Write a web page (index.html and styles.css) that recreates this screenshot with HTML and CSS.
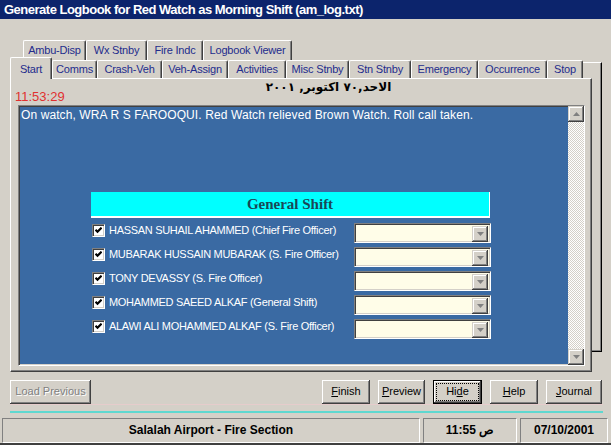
FILE: index.html
```html
<!DOCTYPE html>
<html>
<head>
<meta charset="utf-8">
<link rel="stylesheet" href="styles.css">
</head>
<body>
<div class="win">
  <div class="title">Generate Logbook for Red Watch as Morning Shift (am_log.txt)</div>
  <div class="tabctl">
    <div class="row1">
      <div class="tab w-ambu">Ambu-Disp</div>
      <div class="tab w-wx">Wx Stnby</div>
      <div class="tab w-fire">Fire Indc</div>
      <div class="tab w-logv">Logbook Viewer</div>
    </div>
    <div class="front-wrap">
      <div class="front">
        <div class="row2">
          <div class="tab sel w-start">Start</div>
          <div class="tab w-comms">Comms</div>
          <div class="tab w-crash">Crash-Veh</div>
          <div class="tab w-veh">Veh-Assign</div>
          <div class="tab w-act">Activities</div>
          <div class="tab w-misc">Misc Stnby</div>
          <div class="tab w-stn">Stn Stnby</div>
          <div class="tab w-emer">Emergency</div>
          <div class="tab w-occ">Occurrence</div>
          <div class="tab w-stop">Stop</div>
          <div class="filler"></div>
        </div>
        <div class="page">
          <div class="date">الاحد,٧٠ اكتوبر, ٢٠٠١</div>
          <div class="clock">11:53:29</div>
          <div class="memo">
            <div class="memo-body">
              <div class="memo-text">On watch, WRA R S FAROOQUI. Red Watch relieved Brown Watch. Roll call taken.</div>
              <div class="gshift">General Shift</div>
              <div class="rows">
                <div class="row">
                  <span class="chk"><svg width="7" height="7" viewBox="0 0 7 7"><polyline points="0.5,2.8 2.5,4.8 6.6,0.7" fill="none" stroke="#000" stroke-width="2.2"/></svg></span>
                  <span class="lbl">HASSAN SUHAIL AHAMMED (Chief Fire Officer)</span>
                  <span class="combo"><span class="drop"><svg width="7" height="4" viewBox="0 0 7 4"><path d="M0 0h7L3.5 4z" fill="#808080"/></svg></span></span>
                </div>
                <div class="row">
                  <span class="chk"><svg width="7" height="7" viewBox="0 0 7 7"><polyline points="0.5,2.8 2.5,4.8 6.6,0.7" fill="none" stroke="#000" stroke-width="2.2"/></svg></span>
                  <span class="lbl">MUBARAK HUSSAIN MUBARAK (S. Fire Officer)</span>
                  <span class="combo"><span class="drop"><svg width="7" height="4" viewBox="0 0 7 4"><path d="M0 0h7L3.5 4z" fill="#808080"/></svg></span></span>
                </div>
                <div class="row">
                  <span class="chk"><svg width="7" height="7" viewBox="0 0 7 7"><polyline points="0.5,2.8 2.5,4.8 6.6,0.7" fill="none" stroke="#000" stroke-width="2.2"/></svg></span>
                  <span class="lbl">TONY DEVASSY (S. Fire Officer)</span>
                  <span class="combo"><span class="drop"><svg width="7" height="4" viewBox="0 0 7 4"><path d="M0 0h7L3.5 4z" fill="#808080"/></svg></span></span>
                </div>
                <div class="row">
                  <span class="chk"><svg width="7" height="7" viewBox="0 0 7 7"><polyline points="0.5,2.8 2.5,4.8 6.6,0.7" fill="none" stroke="#000" stroke-width="2.2"/></svg></span>
                  <span class="lbl">MOHAMMED SAEED ALKAF (General Shift)</span>
                  <span class="combo"><span class="drop"><svg width="7" height="4" viewBox="0 0 7 4"><path d="M0 0h7L3.5 4z" fill="#808080"/></svg></span></span>
                </div>
                <div class="row">
                  <span class="chk"><svg width="7" height="7" viewBox="0 0 7 7"><polyline points="0.5,2.8 2.5,4.8 6.6,0.7" fill="none" stroke="#000" stroke-width="2.2"/></svg></span>
                  <span class="lbl">ALAWI ALI MOHAMMED ALKAF (S. Fire Officer)</span>
                  <span class="combo"><span class="drop"><svg width="7" height="4" viewBox="0 0 7 4"><path d="M0 0h7L3.5 4z" fill="#808080"/></svg></span></span>
                </div>
              </div>
            </div>
            <div class="vscroll">
              <div class="sbtn"><svg width="7" height="4" viewBox="0 0 7 4"><path d="M3.5 0L7 4H0z" fill="#808080"/></svg></div>
              <div class="track"></div>
              <div class="sbtn"><svg width="7" height="4" viewBox="0 0 7 4"><path d="M0 0h7L3.5 4z" fill="#808080"/></svg></div>
            </div>
          </div>
        </div>
      </div>
      <div class="backedge"></div>
    </div>
  </div>
  <div class="buttons">
    <div class="btn disabled w-load">Load Previous</div>
    <div class="btn w-finish first"><u>F</u>inish</div>
    <div class="btn w-prev"><u>P</u>review</div>
    <div class="btn w-hide default"><span class="focus">Hi<u>d</u>e</span></div>
    <div class="btn w-help"><u>H</u>elp</div>
    <div class="btn w-journal"><u>J</u>ournal</div>
  </div>
  <div class="pinkline"></div>
  <div class="cyanline"></div>
  <div class="status">
    <div class="panel p1">Salalah Airport - Fire Section</div>
    <div class="panel p2">11:55 ص</div>
    <div class="panel p3">07/10/2001</div>
  </div>
</div>
</body>
</html>
```

FILE: styles.css
```css
* { box-sizing: border-box; }
html, body { margin: 0; padding: 0; }
body {
  width: 611px; height: 445px; overflow: hidden;
  background: #d4d0c8;
  font-family: "Liberation Sans", Arial, sans-serif;
  font-size: 11px; color: #000;
}
.win {
  width: 611px; height: 445px;
  display: flex; flex-direction: column;
  background: #d4d0c8;
  border-bottom: 2px solid #404040;
}
.title {
  flex: none; height: 19px;
  background: #0c246c; color: #fff;
  font-weight: bold; font-size: 13px; line-height: 19px;
  letter-spacing: -0.5px;
  padding-left: 4px; white-space: nowrap;
}
.tabctl { flex: none; margin-top: 21px; }
.row1 { display: flex; height: 20px; padding-left: 23px; }
.tab {
  flex: none;
  border-top: 1px solid #fff; border-left: 1px solid #fff;
  border-right: 1px solid #404040;
  box-shadow: inset -1px 0 #808080;
  border-radius: 2px 2px 0 0;
  color: #232c8c; text-align: center; white-space: nowrap;
  letter-spacing: -0.2px;
}
.row1 .tab { height: 20px; line-height: 16px; padding-top: 1px; }
.front-wrap { display: flex; }
.front { width: 582px; flex: none; margin-left: 10px; }
.backedge {
  flex: none; width: 10px; height: 290px; margin-top: 2px;
  border-top: 1px solid #fff; border-right: 1px solid #000; border-bottom: 1px solid #000;
  box-shadow: inset -1px -1px #808080;
}
.row2 { display: flex; align-items: flex-end; height: 18px; }
.row2 .tab { height: 18px; line-height: 16px; }
.row2 .tab.sel {
  position: relative; z-index: 2;
  height: 22px; margin-bottom: -1px;
  padding-top: 3px; background: #d4d0c8;
}
.filler { flex: none; width: 9px; height: 16px; border-top: 1px solid #fff; }
.w-ambu { width: 63px; } .w-wx { width: 61px; } .w-fire { width: 56px; } .w-logv { width: 89px; }
.w-start { width: 42px; } .w-comms { width: 45px; } .w-crash { width: 65px; } .w-veh { width: 66px; }
.w-act { width: 58px; } .w-misc { width: 63px; } .w-stn { width: 62px; } .w-emer { width: 67px; }
.w-occ { width: 69px; } .w-stop { width: 36px; }
.page {
  width: 582px; height: 294px;
  border-top: 1px solid #fff; border-left: 1px solid #fff;
  border-right: 1px solid #404040; border-bottom: 1px solid #404040;
  box-shadow: inset -1px -1px #808080;
  padding-left: 7px;
}
.date {
  height: 10px; line-height: 16px;
  text-align: center; padding-left: 48px;
  font-family: "DejaVu Sans", sans-serif; font-weight: bold; font-size: 12px;
  white-space: nowrap;
}
.clock {
  height: 15px; line-height: 15px; margin-left: -3px;
  color: #e03030; font-size: 13px;
}
.memo {
  margin-top: 1px; width: 567px; height: 261px;
  display: flex;
  background: #3a6aa3;
  border-top: 1px solid #808080; border-left: 1px solid #808080;
  border-right: 1px solid #fff; border-bottom: 1px solid #fff;
  box-shadow: inset 1px 1px #404040, inset -1px -1px #d4d0c8;
}
.memo-body { flex: 1; padding: 2px 0 0 2px; color: #fff; }
.memo-text { font-size: 12px; line-height: 15px; white-space: nowrap; letter-spacing: 0.1px; }
.gshift {
  margin: 69px 0 0 70px; width: 399px; height: 26px;
  background: #00ffff;
  border-right: 1px solid #fff; border-bottom: 2px solid #fff;
  color: #1a4656; text-align: center;
  font-family: "Liberation Serif", "Times New Roman", serif; font-weight: bold; font-size: 15px;
  line-height: 24px;
}
.rows { margin: 3px 0 0 71px; }
.row { display: flex; height: 24px; align-items: flex-start; }
.chk {
  flex: none; width: 13px; height: 13px; margin-top: 3px;
  background: #fff;
  border-top: 1px solid #808080; border-left: 1px solid #808080;
  border-right: 1px solid #fff; border-bottom: 1px solid #fff;
  box-shadow: inset 1px 1px #404040, inset -1px -1px #d4d0c8;
  display: flex; align-items: center; justify-content: center;
}
.chk svg { display: block; }
.lbl {
  flex: none; width: 245px; margin-left: 4px;
  line-height: 18px; white-space: nowrap; letter-spacing: -0.3px;
}
.combo {
  flex: none; width: 137px; height: 20px; margin-top: 2px;
  background: #fffde8;
  border-top: 1px solid #808080; border-left: 1px solid #808080;
  border-right: 1px solid #fff; border-bottom: 1px solid #fff;
  box-shadow: inset 1px 1px #404040, inset -1px -1px #d4d0c8;
  display: flex; justify-content: flex-end; padding: 2px;
}
.drop, .sbtn {
  flex: none; width: 16px; height: 16px;
  background: #d4d0c8;
  box-shadow: inset -1px -1px #404040, inset 1px 1px #d4d0c8, inset -2px -2px #808080, inset 2px 2px #fff;
  display: flex; align-items: center; justify-content: center;
}
.vscroll { flex: none; width: 16px; display: flex; flex-direction: column; }
.track {
  flex: 1;
  background: repeating-conic-gradient(#fff 0 25%, #d4d0c8 0 50%) 0 0 / 2px 2px;
}
.buttons {
  flex: none; display: flex; gap: 8px;
  margin-top: 8px; height: 24px;
  padding: 0 9px 0 10px;
}
.btn {
  flex: none; height: 24px;
  background: #d4d0c8;
  box-shadow: inset -1px -1px #404040, inset 1px 1px #fff, inset -2px -2px #808080, inset 2px 2px #d4d0c8;
  text-align: center; line-height: 23px; white-space: nowrap;
}
.btn.first { margin-left: auto; }
.btn.disabled { color: #808080; text-shadow: 1px 1px 0 #fff; }
.btn.default {
  border: 1px solid #000;
  padding: 3px;
  line-height: 15px;
}
.focus { display: block; height: 16px; outline: 1px dotted #000; outline-offset: 0; }
.w-load { width: 81px; } .w-finish { width: 48px; } .w-prev { width: 47px; }
.w-hide { width: 49px; } .w-help { width: 48px; } .w-journal { width: 56px; }
.pinkline { flex: none; height: 1px; margin: 0 8px 0 10px; background: #e6cccc; }
.cyanline { flex: none; height: 2px; margin: 6px 8px 0 10px; background: #5ed8d0; }
.status {
  flex: none; display: flex; gap: 3px;
  margin-top: 5px; height: 25px; padding-left: 2px;
}
.panel {
  flex: none; height: 25px;
  border-top: 1px solid #808080; border-left: 1px solid #808080;
  border-right: 1px solid #fff; border-bottom: 1px solid #fff;
  text-align: center; font-weight: bold; font-size: 12px; line-height: 23px;
  white-space: nowrap;
}
.p1 { width: 418px; } .p2 { width: 94px; } .p3 { width: 88px; }
```
